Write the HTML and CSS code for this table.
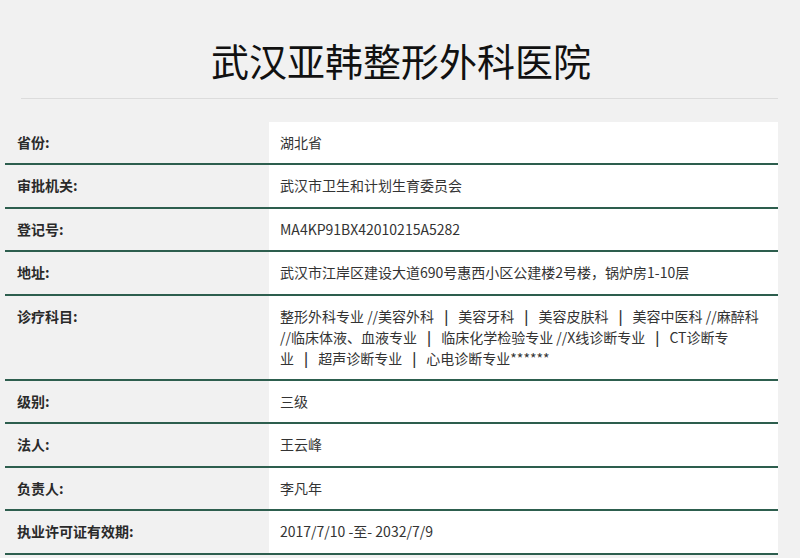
FILE: index.html
```html
<!DOCTYPE html>
<html lang="zh-CN">
<head>
<meta charset="utf-8">
<title>武汉亚韩整形外科医院</title>
<link rel="stylesheet" href="styles.css">
</head>
<body>
<div class="page">
  <h1 class="title">武汉亚韩整形外科医院</h1>
  <hr class="rule">
  <div class="info">
    <div class="row"><div class="label">省份:</div><div class="value">湖北省</div></div>
    <div class="row"><div class="label">审批机关:</div><div class="value">武汉市卫生和计划生育委员会</div></div>
    <div class="row"><div class="label">登记号:</div><div class="value">MA4KP91BX42010215A5282</div></div>
    <div class="row"><div class="label">地址:</div><div class="value">武汉市江岸区建设大道690号惠西小区公建楼2号楼，锅炉房1-10层</div></div>
    <div class="row"><div class="label">诊疗科目:</div><div class="value">整形外科专业 //美容外科<span class="sep">|</span>美容牙科<span class="sep">|</span>美容皮肤科<span class="sep">|</span>美容中医科 //麻醉科<br>//临床体液、血液专业<span class="sep">|</span>临床化学检验专业 //X线诊断专业<span class="sep">|</span>CT诊断专<br>业<span class="sep">|</span>超声诊断专业<span class="sep">|</span>心电诊断专业******</div></div>
    <div class="row"><div class="label">级别:</div><div class="value">三级</div></div>
    <div class="row"><div class="label">法人:</div><div class="value">王云峰</div></div>
    <div class="row"><div class="label">负责人:</div><div class="value">李凡年</div></div>
    <div class="row"><div class="label">执业许可证有效期:</div><div class="value">2017/7/10 -至- 2032/7/9</div></div>
  </div>
</div>
</body>
</html>
```

FILE: styles.css
```css
* { box-sizing: border-box; }
html, body {
  margin: 0;
  padding: 0;
  background: #f1f1f1;
}
body {
  font-family: "Noto Sans CJK SC", "Noto Sans", sans-serif;
  color: #333;
  font-size: 14px;
}
.page {
  width: 800px;
  height: 558px;
  overflow: hidden;
  padding-top: 36px;
}
.title {
  margin: 0;
  text-align: center;
  font-size: 38px;
  font-weight: 400;
  line-height: 48px;
  color: #111;
  padding-left: 2px;
}
.rule {
  margin: 14px 22px 0 21px;
  border: 0;
  border-top: 1px solid #dcdcdc;
  height: 0;
}
.info {
  margin: 23px 22px 0 5px;
}
.row {
  display: grid;
  grid-template-columns: 264px 1fr;
  border-bottom: 2px solid #2d5e4e;
}
.label {
  padding: 10px 12px 10.4px;
  line-height: 21px;
  font-weight: 700;
  color: #2a2a2a;
}
.value {
  background: #fff;
  padding: 10px 11px 10.4px;
  line-height: 21px;
  color: #333;
}
.sep {
  margin: 0 10px;
  font-weight: 700;
}
```
